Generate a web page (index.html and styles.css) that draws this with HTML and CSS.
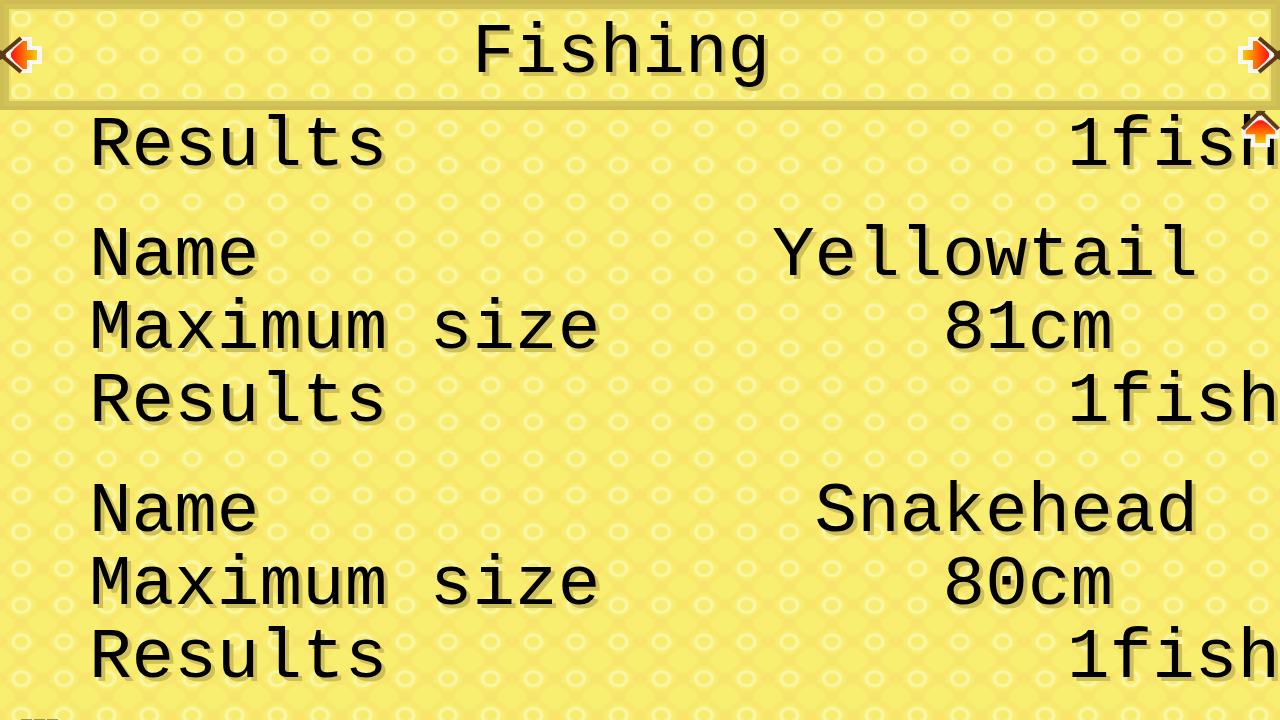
FILE: index.html
```
<!DOCTYPE html>
<html lang="en">
<head>
    <meta charset="UTF-8">
    <meta name="viewport" content="width=device-width, initial-scale=1.0">
    <title>Fishing</title>
    <link rel="stylesheet" href="styles.css">
</head>
<body>
    <svg class="defs" width="0" height="0" aria-hidden="true">
        <defs>
            <linearGradient id="fire" x1="0" y1="0" x2="1" y2="0">
                <stop offset="0.1" stop-color="#ff2010"/>
                <stop offset="0.55" stop-color="#ff7800"/>
                <stop offset="1" stop-color="#f8cc00"/>
            </linearGradient>
            <symbol id="arrow" viewBox="0 0 42 40" preserveAspectRatio="none">
                <path d="M1 20 L20 2 H32 V11 H42 V29 H32 V38 H20 Z" fill="#fbf7f3"/>
                <path d="M21 3 L1 20 L21 37" fill="none" stroke="#5c3a18" stroke-width="4"/>
                <path d="M0 15 L6 18 V22 L0 25 Z" fill="#5c3a18"/>
                <path d="M22 5 L5 20 L22 35" fill="none" stroke="#d8c8c0" stroke-width="1" stroke-dasharray="2 2"/>
                <path d="M11 18 L15 13 L23 6 H27 V15 H37 V25 H27 V34 H23 L15 27 L11 22 Z" fill="url(#fire)"/>
            </symbol>
        </defs>
    </svg>

    <header class="title-bar">
        <button class="arrow" aria-label="Previous page"><svg width="42" height="40"><use href="#arrow"/></svg></button>
        <h1>Fishing</h1>
        <button class="arrow next" aria-label="Next page"><svg width="42" height="40"><use href="#arrow"/></svg></button>
    </header>

    <main class="records">
        <button class="arrow up" aria-label="Scroll up"><svg width="37" height="42"><use href="#arrow"/></svg></button>

        <dl class="record">
            <div class="row"><dt>Results</dt><dd class="count">1fish</dd></div>
        </dl>
        <dl class="record">
            <div class="row"><dt>Name</dt><dd class="name">Yellowtail</dd></div>
            <div class="row"><dt>Maximum size</dt><dd class="size">81cm</dd></div>
            <div class="row"><dt>Results</dt><dd class="count">1fish</dd></div>
        </dl>
        <dl class="record">
            <div class="row"><dt>Name</dt><dd class="name">Snakehead</dd></div>
            <div class="row"><dt>Maximum size</dt><dd class="size">80cm</dd></div>
            <div class="row"><dt>Results</dt><dd class="count">1fish</dd></div>
        </dl>
        <div class="more"></div>
    </main>
</body>
</html>
```
FILE: styles.css
```
* {
    box-sizing: border-box;
}
html {
    height: 100%;
    overflow: hidden;
}
body {
    margin: 0;
    height: 100%;
    overflow: hidden;
    color: #000;
    font: 71px/73px "Liberation Mono", monospace;
    text-shadow: 4px 4px 0 #cfbf58;
    /* three by three ring tiles */
    background: #f8ee70 url("data:image/svg+xml,%3Csvg xmlns='http://www.w3.org/2000/svg' width='128' height='110' viewBox='0 0 48 48' preserveAspectRatio='none'%3E%3Cdefs%3E%3Cpattern id='t' width='16' height='16' patternUnits='userSpaceOnUse'%3E%3Cpath d='M8 0 L16 8 L8 16 L0 8 Z' stroke='%23f8e86c' stroke-width='2' fill='none'/%3E%3Cpath d='M5 0 H11 L8 3 Z M5 16 H11 L8 13 Z M0 5 V11 L3 8 Z M16 5 V11 L13 8 Z' fill='%23f8e66c'/%3E%3Cellipse cx='8' cy='8.1' rx='3.1' ry='3.1' fill='%23f8ec70' stroke='%23f9f6a4' stroke-width='1.4'/%3E%3C/pattern%3E%3C/defs%3E%3Crect width='48' height='48' fill='url(%23t)'/%3E%3C/svg%3E") 0 0 / 128px 110px;
}
.defs {
    position: absolute;
}
h1, dl, dd {
    margin: 0;
    font-weight: normal;
}
.title-bar {
    display: flex;
    align-items: center;
    justify-content: space-between;
    height: 110px;
    box-shadow: inset 0 0 0 4px #cdbd54, inset 0 0 0 9px #d3c45a, inset 0 0 0 11px #eee06a;
}
.title-bar h1 {
    padding: 0 38px 4px 0;
    font-size: 71px;
}
.arrow {
    display: block;
    padding: 0;
    border: 0;
    background: none;
    cursor: pointer;
}
.arrow svg {
    display: block;
}
.next {
    transform: rotate(180deg);
}
.up {
    position: absolute;
    top: -2px;
    right: 1px;
    transform: rotate(90deg);
}
.records {
    position: relative;
}
.record {
    margin-bottom: 37px;
    padding-left: 89px;
}
.record:last-of-type {
    margin-bottom: 24px;
}
.row {
    display: flex;
    justify-content: space-between;
    white-space: nowrap;
}
.name {
    margin-right: 82px;
}
.size {
    margin-right: 167px;
}
/* top edge of the next line */
.more {
    width: 38px;
    height: 1px;
    margin-left: 21px;
    background: repeating-linear-gradient(90deg, #a09450 0 11px, transparent 11px 13px);
}
```
